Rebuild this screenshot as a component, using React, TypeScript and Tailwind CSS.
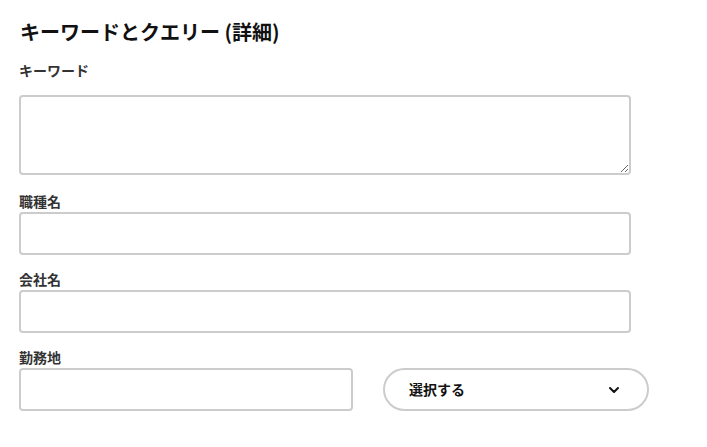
import React from "react";
import { ChevronDown } from "lucide-react";

const font = { fontFamily: '"Noto Sans CJK JP", "Noto Sans", sans-serif' };

export default function App() {
  return (
    <div className="w-[707px] h-[447px] bg-white pl-[19px] text-[#222]" style={font}>
      <h2 className="pt-[18px] text-[20px] leading-[28px] font-bold text-[#111] pl-[1px]">
        キーワードとクエリー (詳細)
      </h2>
      <label className="block mt-[14px] text-[14px] leading-[20px] font-bold text-[#333]">キーワード</label>
      <textarea className="block mt-[15px] w-[612px] h-[80px] border-2 border-[#cccccc] rounded-[4px] outline-none" />
      <label className="block mt-[16px] text-[14px] leading-[20px] font-bold text-[#333]">職種名</label>
      <input className="block mt-[1px] w-[612px] h-[43px] border-2 border-[#cccccc] rounded-[4px] outline-none" />
      <label className="block mt-[14px] text-[14px] leading-[20px] font-bold text-[#333]">会社名</label>
      <input className="block mt-[1px] w-[612px] h-[43px] border-2 border-[#cccccc] rounded-[4px] outline-none" />
      <label className="block mt-[14px] text-[14px] leading-[20px] font-bold text-[#333]">勤務地</label>
      <div className="mt-[1px] flex gap-[30px]">
        <input className="block w-[334px] h-[43px] border-2 border-[#cccccc] rounded-[4px] outline-none" />
        <div className="w-[266px] h-[43px] border-2 border-[#cccccc] rounded-full flex items-center justify-between pl-[24px] pr-[25px]">
          <span className="text-[14px] font-bold text-[#111]">選択する</span>
          <ChevronDown size={16} strokeWidth={3} className="text-[#111]" />
        </div>
      </div>
    </div>
  );
}
